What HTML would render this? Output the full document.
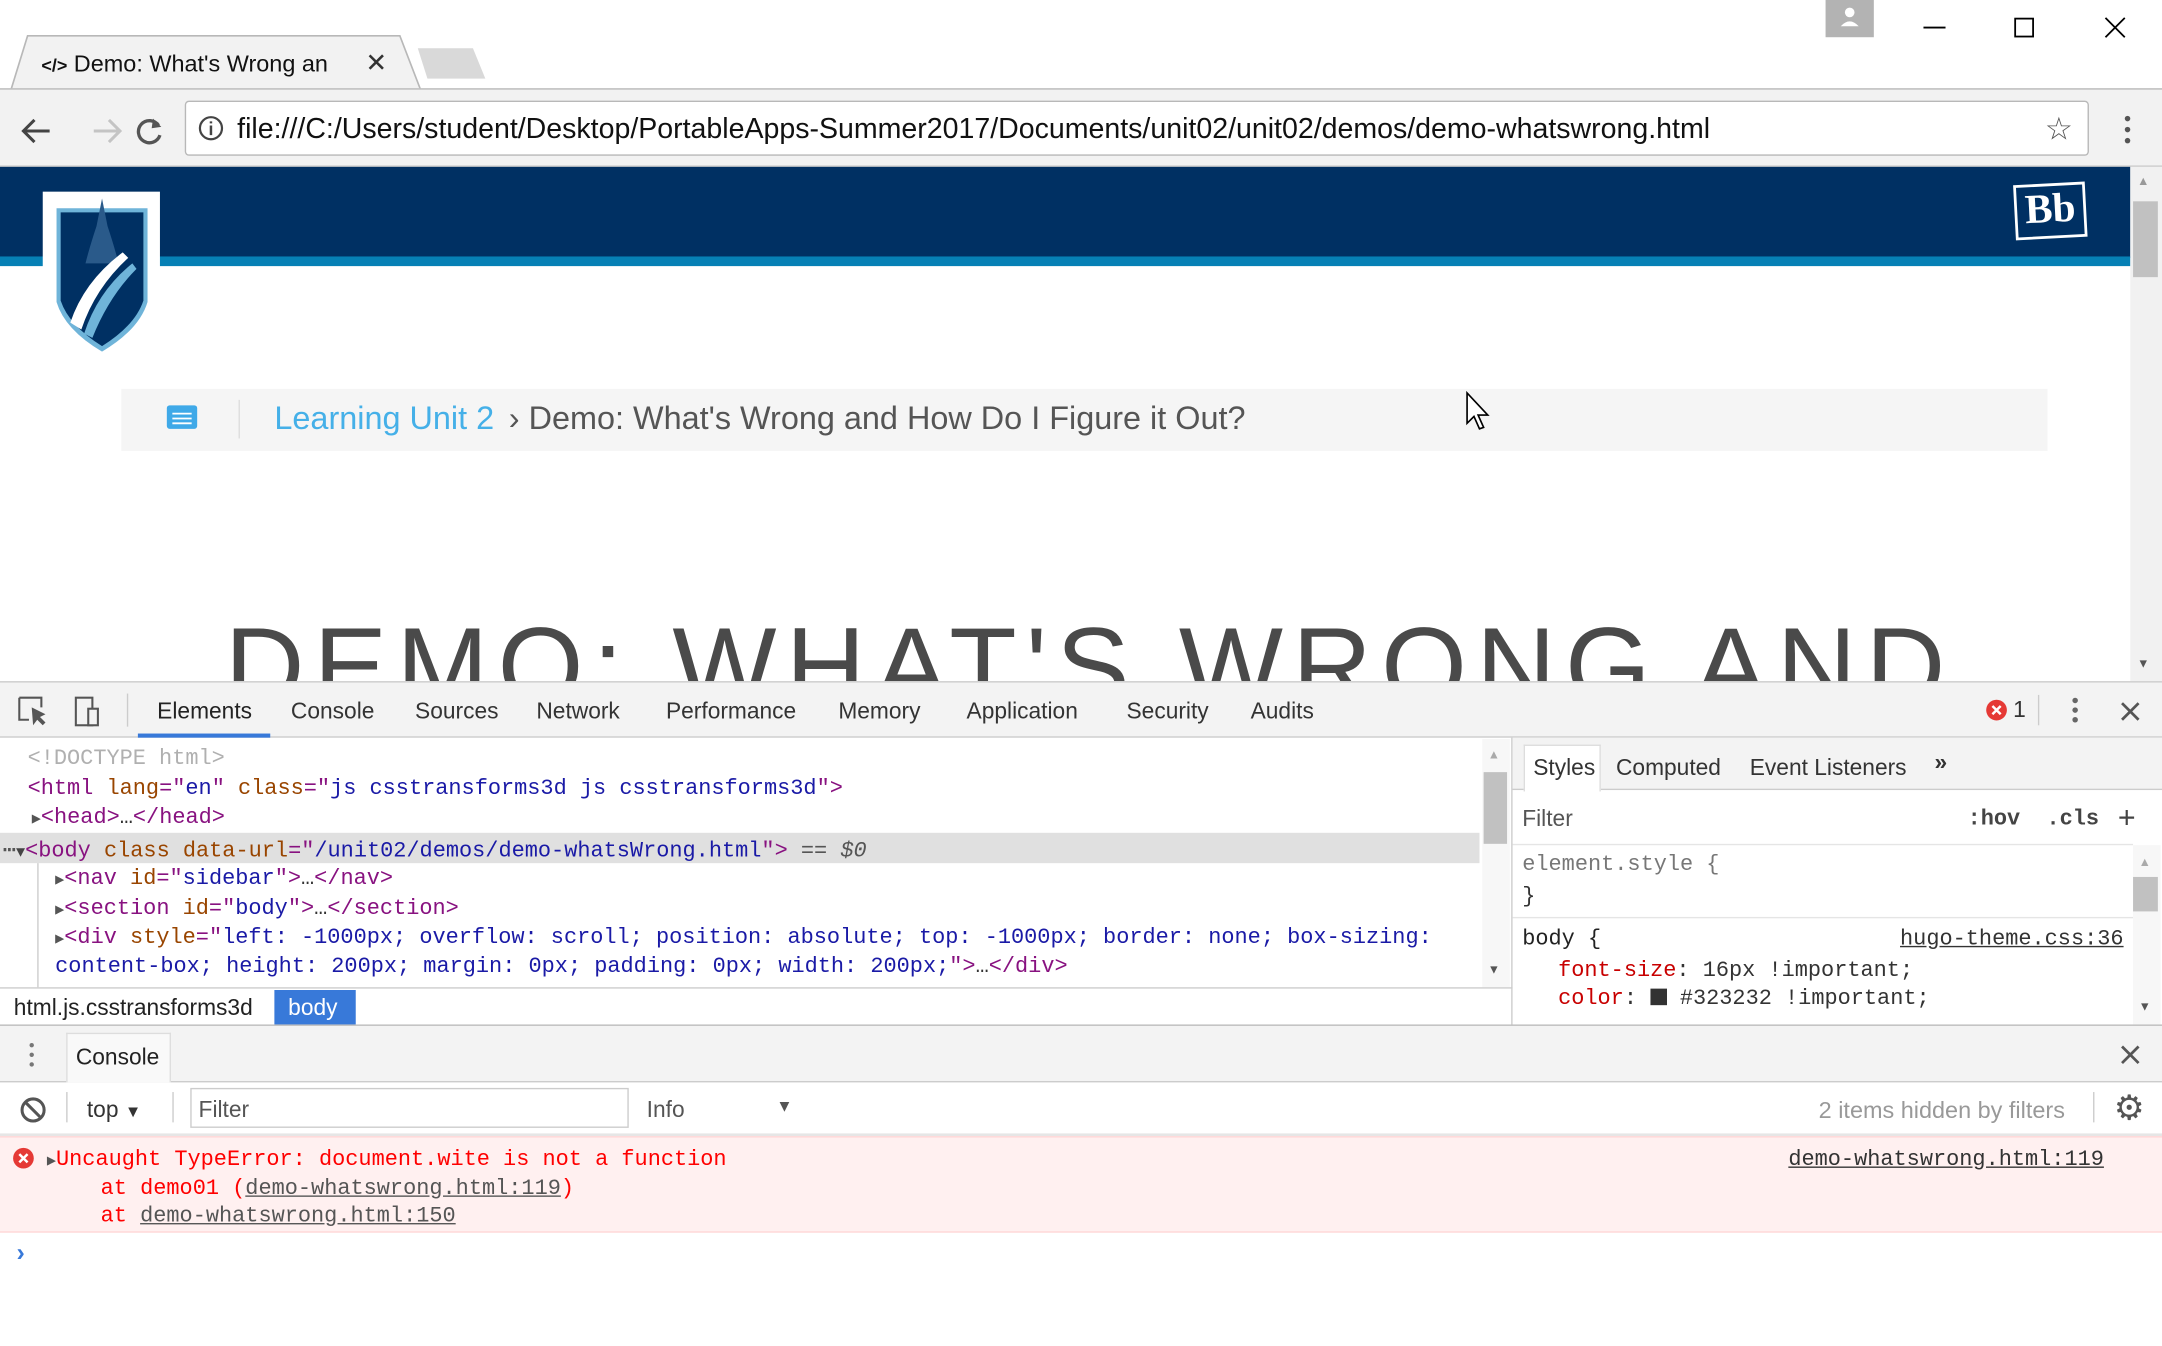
<!DOCTYPE html>
<html><head><meta charset="utf-8">
<style>
*{margin:0;padding:0;box-sizing:border-box}
html,body{width:2162px;height:1346px;overflow:hidden;background:#fff}
#s{position:absolute;left:0;top:0;width:1568px;height:976px;transform:scale(1.37883);transform-origin:0 0;font-family:"Liberation Sans",sans-serif;color:#333;overflow:hidden}
.a{position:absolute;white-space:nowrap}
.m{font-family:"Liberation Mono",monospace;font-size:15.9px}
.ui{font-size:16.5px;color:#333}
.tag{color:#881280}.an{color:#994500}.av{color:#1a1aa6}
</style></head><body><div id="s">
<div class="a" style="left:0;top:0;width:1568px;height:66px;background:#fff"></div>
<svg class="a" style="left:0;top:20px" width="400" height="50"><path d="M0 45 H8 L20 6 H290 L305 45 H400" fill="#f2f2f2" stroke="#b8b8b8" stroke-width="1.2"/><path d="M303 15 H343 L352 37 H310 Z" fill="#d9d9d9"/></svg>
<div class="a" style="left:30px;top:37px;font-size:17px;color:#111"><b style="font-size:13px">&lt;/&gt;</b> Demo: What's Wrong an</div>
<div class="a" style="left:265px;top:35px;font-size:19px;color:#333">✕</div>
<div class="a" style="left:1324px;top:0;width:35px;height:27px;background:#b3b3b3"><svg width="35" height="27"><circle cx="17.5" cy="9" r="3.5" fill="#fff"/><path d="M11 19 Q17.5 12 24 19Z" fill="#fff"/></svg></div>
<svg class="a" style="left:1390px;top:8px" width="160" height="24"><path d="M5 12 H21" stroke="#000" stroke-width="1.3"/><rect x="71.5" y="5.5" width="13" height="13" fill="none" stroke="#000" stroke-width="1.3"/><path d="M137 5 L151 19 M151 5 L137 19" stroke="#000" stroke-width="1.3"/></svg>
<div class="a" style="left:0;top:64px;width:1568px;height:57px;background:#f2f2f2;border-top:1px solid #b8b8b8;border-bottom:1px solid #c8c8c8"></div>
<svg class="a" style="left:10px;top:80px" width="110" height="30"><path d="M26 15 H8 M15 7 L7 15 L15 23" stroke="#444" stroke-width="2.2" fill="none"/><path d="M76 15 H58 M69 7 L77 15 L69 23" stroke="#c4c4c4" stroke-width="2.2" fill="none"/><path d="M105 11 A8 8 0 1 0 106 18" stroke="#555" stroke-width="2.4" fill="none"/><path d="M101 6 L107 12 L100 13Z" fill="#555"/></svg>
<div class="a" style="left:134px;top:73px;width:1381px;height:40px;background:#fff;border:1px solid #b8b8b8;border-radius:3px"></div>
<svg class="a" style="left:143px;top:83px" width="20" height="20"><circle cx="10" cy="10" r="8" fill="none" stroke="#444" stroke-width="1.6"/><path d="M10 8 V15 M10 5 V6.5" stroke="#444" stroke-width="1.8"/></svg>
<div class="a" style="left:172px;top:82px;font-size:20.7px;color:#111">file:///C:/Users/student/Desktop/PortableApps-Summer2017/Documents/unit02/unit02/demos/demo-whatswrong.html</div>
<div class="a" style="left:1483px;top:80px;font-size:23px;color:#555">☆</div>
<svg class="a" style="left:1538px;top:82px" width="10" height="24"><circle cx="5" cy="4" r="2" fill="#555"/><circle cx="5" cy="12" r="2" fill="#555"/><circle cx="5" cy="20" r="2" fill="#555"/></svg>
<div class="a" style="left:0;top:121px;width:1545px;height:66px;background:#003063"></div>
<div class="a" style="left:0;top:186px;width:1545px;height:7px;background:#0680b5"></div>
<div class="a" style="left:1461px;top:133px;width:52px;height:40px;border:2px solid #fff;transform:rotate(-3deg);color:#fff;font-family:'Liberation Serif',serif;font-size:30px;font-weight:bold;text-align:center;line-height:34px">Bb</div>
<div class="a" style="left:31px;top:139px;width:85px;height:116px;background:#fff"></div>
<svg class="a" style="left:31px;top:139px" width="85" height="116"><path d="M10 12 H76 V80 Q70 100 43 116 Q16 100 10 80Z" fill="#6fb4d9"/><path d="M13 15 H73 V79 Q67 97 43 112 Q19 97 13 79Z" fill="#003063"/><path d="M43 5 L47 25 Q52 40 55 52 H31 Q34 40 39 25Z" fill="#2a5a8a"/><path d="M20 95 Q30 65 58 44 L62 48 Q38 70 28 100Z" fill="#fff"/><path d="M30 103 Q40 72 65 52 L68 56 Q48 76 36 106Z" fill="#6fb4d9"/></svg>
<div class="a" style="left:88px;top:282px;width:1397px;height:45px;background:#f5f5f5"></div>
<svg class="a" style="left:120px;top:293px" width="24" height="20"><rect x="1" y="1" width="22" height="17" rx="2" fill="#3fa9e8"/><path d="M5 7 H19 M5 10.5 H19 M5 14 H19" stroke="#fff" stroke-width="1.3"/></svg>
<div class="a" style="left:173px;top:290px;width:1px;height:28px;background:#ddd"></div>
<div class="a" style="left:199px;top:290px;font-size:23.5px;color:#45b0e8">Learning Unit 2</div>
<div class="a" style="left:369px;top:290px;font-size:23.5px;color:#555">› Demo: What's Wrong and How Do I Figure it Out?</div>
<svg class="a" style="left:1062px;top:283px" width="20" height="30"><path d="M2 2 V24 L7 19 L11 28 L14 27 L10 18 L17 18Z" fill="#fff" stroke="#000" stroke-width="1.2"/></svg>
<div class="a" style="left:0;top:420px;width:1545px;height:74px;overflow:hidden"><div class="a" style="left:163px;top:18px;font-size:80px;letter-spacing:6.7px;color:#4a4a4a">DEMO: WHAT'S WRONG AND</div></div>
<div class="a" style="left:1545px;top:121px;width:23px;height:373px;background:#f1f1f1"></div>
<div class="a" style="left:1547px;top:146px;width:18px;height:55px;background:#c1c1c1"></div>
<div class="a" style="left:1550px;top:126px;font-size:9px;color:#999">▲</div>
<div class="a" style="left:1550px;top:476px;font-size:9px;color:#555">▼</div>
<div class="a" style="left:0;top:494px;width:1568px;height:41px;background:#f3f3f3;border-top:1px solid #ccc;border-bottom:1px solid #ccc"></div>
<svg class="a" style="left:12px;top:504px" width="64" height="24"><path d="M2 2 H18 V9 M2 2 V18 H9" stroke="#555" stroke-width="1.5" fill="none"/><path d="M11 9 L12 22 L15 18 L19 22 L21 20 L17 16 L21 14Z" fill="#555"/><rect x="43" y="2" width="12" height="20" fill="none" stroke="#555" stroke-width="1.5"/><rect x="52" y="10" width="7" height="12" fill="#f3f3f3" stroke="#555" stroke-width="1.5"/></svg>
<div class="a" style="left:92px;top:503px;width:1px;height:24px;background:#ccc"></div>
<div class="a ui" style="left:114px;top:507px;color:#222">Elements</div>
<div class="a" style="left:100px;top:532px;width:96px;height:3px;background:#3879d9"></div>
<div class="a ui" style="left:211px;top:507px">Console</div>
<div class="a ui" style="left:301px;top:507px">Sources</div>
<div class="a ui" style="left:389px;top:507px">Network</div>
<div class="a ui" style="left:483px;top:507px">Performance</div>
<div class="a ui" style="left:608px;top:507px">Memory</div>
<div class="a ui" style="left:701px;top:507px">Application</div>
<div class="a ui" style="left:817px;top:507px">Security</div>
<div class="a ui" style="left:907px;top:507px">Audits</div>
<svg class="a" style="left:1440px;top:507px" width="16" height="16"><circle cx="8" cy="8" r="7.5" fill="#e53935"/><path d="M5 5 L11 11 M11 5 L5 11" stroke="#fff" stroke-width="1.8"/></svg>
<div class="a ui" style="left:1460px;top:506px">1</div>
<div class="a" style="left:1478px;top:504px;width:1px;height:22px;background:#ccc"></div>
<svg class="a" style="left:1500px;top:505px" width="10" height="22"><circle cx="5" cy="3" r="2" fill="#666"/><circle cx="5" cy="10" r="2" fill="#666"/><circle cx="5" cy="17" r="2" fill="#666"/></svg>
<svg class="a" style="left:1537px;top:508px" width="16" height="16"><path d="M2 2 L14 14 M14 2 L2 14" stroke="#555" stroke-width="2"/></svg>
<div class="a" style="left:0;top:604px;width:1073px;height:22px;background:#e0e0e0"></div>
<div class="a m" style="left:20px;top:541px;color:#b0b0b0">&lt;!DOCTYPE html&gt;</div>
<div class="a m" style="left:20px;top:563px"><span class="tag">&lt;html </span><span class="an">lang</span><span class="tag">="</span><span class="av">en</span><span class="tag">" </span><span class="an">class</span><span class="tag">="</span><span class="av">js csstransforms3d js csstransforms3d</span><span class="tag">"&gt;</span></div>
<div class="a m" style="left:23px;top:584px"><span style="color:#555;font-size:11px">▶</span><span class="tag">&lt;head&gt;</span>…<span class="tag">&lt;/head&gt;</span></div>
<div class="a m" style="left:2px;top:606px"><span style="color:#555">⋯</span><span style="color:#444;font-size:11px">▼</span><span class="tag">&lt;body </span><span class="an">class data-url</span><span class="tag">="</span><span class="av">/unit02/demos/demo-whatsWrong.html</span><span class="tag">"&gt;</span><span style="color:#555"> == <i>$0</i></span></div>
<div class="a" style="left:27px;top:626px;width:1px;height:91px;background:#ccc"></div>
<div class="a m" style="left:40px;top:628px"><span style="color:#555;font-size:11px">▶</span><span class="tag">&lt;nav </span><span class="an">id</span><span class="tag">="</span><span class="av">sidebar</span><span class="tag">"&gt;</span>…<span class="tag">&lt;/nav&gt;</span></div>
<div class="a m" style="left:40px;top:650px"><span style="color:#555;font-size:11px">▶</span><span class="tag">&lt;section </span><span class="an">id</span><span class="tag">="</span><span class="av">body</span><span class="tag">"&gt;</span>…<span class="tag">&lt;/section&gt;</span></div>
<div class="a m" style="left:40px;top:671px"><span style="color:#555;font-size:11px">▶</span><span class="tag">&lt;div </span><span class="an">style</span><span class="tag">="</span><span class="av">left: -1000px; overflow: scroll; position: absolute; top: -1000px; border: none; box-sizing:</span></div>
<div class="a m" style="left:40px;top:692px"><span class="av">content-box; height: 200px; margin: 0px; padding: 0px; width: 200px;</span><span class="tag">"&gt;</span>…<span class="tag">&lt;/div&gt;</span></div>
<div class="a" style="left:1075px;top:536px;width:20px;height:181px;background:#f7f7f7"></div>
<div class="a" style="left:1076px;top:560px;width:17px;height:52px;background:#c1c1c1"></div>
<div class="a" style="left:1079px;top:542px;font-size:9px;color:#aaa">▲</div>
<div class="a" style="left:1079px;top:698px;font-size:9px;color:#555">▼</div>
<div class="a" style="left:0;top:716px;width:1097px;height:27px;background:#fff;border-top:1px solid #ccc"></div>
<div class="a" style="left:10px;top:722px;font-size:16.5px;color:#222">html.js.csstransforms3d</div>
<div class="a" style="left:199px;top:718px;width:59px;height:25px;background:#3879d9;color:#fff;font-size:16.5px;padding:4px 0 0 10px">body</div>
<div class="a" style="left:1096px;top:535px;width:1px;height:208px;background:#ccc"></div>
<div class="a" style="left:1097px;top:535px;width:471px;height:38px;background:#f3f3f3;border-bottom:1px solid #ccc"></div>
<div class="a" style="left:1105px;top:540px;width:56px;height:34px;background:#fff;border:1px solid #ddd;border-bottom:none"></div>
<div class="a ui" style="left:1112px;top:548px">Styles</div>
<div class="a ui" style="left:1172px;top:548px">Computed</div>
<div class="a ui" style="left:1269px;top:548px">Event Listeners</div>
<div class="a ui" style="left:1403px;top:544px;font-weight:bold">»</div>
<div class="a ui" style="left:1104px;top:585px;color:#555">Filter</div>
<div class="a m" style="left:1427px;top:585px;font-weight:bold;color:#444">:hov&nbsp;&nbsp;.cls</div>
<div class="a" style="left:1536px;top:580px;font-size:22px;color:#444">+</div>
<div class="a" style="left:1097px;top:612px;width:450px;height:1px;background:#e5e5e5"></div>
<div class="a m" style="left:1104px;top:618px;color:#777">element.style {</div>
<div class="a m" style="left:1104px;top:641px">}</div>
<div class="a" style="left:1097px;top:665px;width:450px;height:1px;background:#e5e5e5"></div>
<div class="a m" style="left:1104px;top:672px;color:#222">body {</div>
<div class="a m" style="left:1378px;top:672px;color:#333;text-decoration:underline">hugo-theme.css:36</div>
<div class="a m" style="left:1130px;top:695px"><span style="color:#c80000">font-size</span>: 16px !important;</div>
<div class="a m" style="left:1130px;top:715px"><span style="color:#c80000">color</span>: <span style="display:inline-block;width:12px;height:12px;background:#323232;vertical-align:-1px"></span> #323232 !important;</div>
<div class="a" style="left:1547px;top:613px;width:20px;height:130px;background:#f7f7f7"></div>
<div class="a" style="left:1547px;top:636px;width:18px;height:25px;background:#c1c1c1"></div>
<div class="a" style="left:1551px;top:620px;font-size:9px;color:#aaa">▲</div>
<div class="a" style="left:1551px;top:725px;font-size:9px;color:#555">▼</div>
<div class="a" style="left:0;top:743px;width:1568px;height:42px;background:#f3f3f3;border-top:1px solid #bbb;border-bottom:1px solid #ccc"></div>
<svg class="a" style="left:19px;top:755px" width="8" height="20"><circle cx="4" cy="3" r="1.6" fill="#777"/><circle cx="4" cy="10" r="1.6" fill="#777"/><circle cx="4" cy="17" r="1.6" fill="#777"/></svg>
<div class="a" style="left:48px;top:749px;width:76px;height:36px;background:#f9f9f9;border:1px solid #ddd;border-bottom:none"></div>
<div class="a ui" style="left:55px;top:758px;color:#222">Console</div>
<svg class="a" style="left:1537px;top:757px" width="16" height="16"><path d="M2 2 L14 14 M14 2 L2 14" stroke="#555" stroke-width="2"/></svg>
<svg class="a" style="left:13px;top:794px" width="22" height="22"><circle cx="11" cy="11" r="8" fill="none" stroke="#555" stroke-width="2.2"/><path d="M5.5 5.5 L16.5 16.5" stroke="#555" stroke-width="2.2"/></svg>
<div class="a" style="left:48px;top:792px;width:1px;height:22px;background:#ccc"></div>
<div class="a ui" style="left:63px;top:796px">top <span style="font-size:12px">▼</span></div>
<div class="a" style="left:125px;top:792px;width:1px;height:22px;background:#ccc"></div>
<div class="a" style="left:138px;top:789px;width:318px;height:29px;border:1px solid #ccc;background:#fff"></div>
<div class="a ui" style="left:144px;top:796px;color:#555">Filter</div>
<div class="a ui" style="left:469px;top:796px;color:#555">Info</div>
<div class="a" style="left:563px;top:795px;font-size:12px;color:#555">▼</div>
<div class="a ui" style="left:1319px;top:796px;color:#999;font-size:17px">2 items hidden by filters</div>
<div class="a" style="left:1518px;top:792px;width:1px;height:22px;background:#ccc"></div>
<div class="a" style="left:1533px;top:789px;font-size:25px;color:#555">⚙</div>
<div class="a" style="left:0;top:822px;width:1568px;height:2px;background:#e6e6e6"></div>
<div class="a" style="left:0;top:824px;width:1568px;height:70px;background:#fff0f0;border-top:1px solid #ffd6d6;border-bottom:1px solid #ffd6d6"></div>
<svg class="a" style="left:9px;top:832px" width="16" height="16"><circle cx="8" cy="8" r="7.5" fill="#e53935"/><path d="M5 5 L11 11 M11 5 L5 11" stroke="#fff" stroke-width="1.8"/></svg>
<div class="a m" style="left:34px;top:832px;color:#f00"><span style="color:#555;font-size:11px">▶</span>Uncaught TypeError: document.wite is not a function</div>
<div class="a m" style="left:73px;top:853px;color:#f00">at demo01 (<span style="color:#555;text-decoration:underline">demo-whatswrong.html:119</span>)</div>
<div class="a m" style="left:73px;top:873px;color:#f00">at <span style="color:#555;text-decoration:underline">demo-whatswrong.html:150</span></div>
<div class="a m" style="left:1297px;top:832px;color:#333;text-decoration:underline">demo-whatswrong.html:119</div>
<div class="a" style="left:12px;top:898px;font-size:18px;color:#3879d9;font-weight:bold">›</div>
</div></body></html>
